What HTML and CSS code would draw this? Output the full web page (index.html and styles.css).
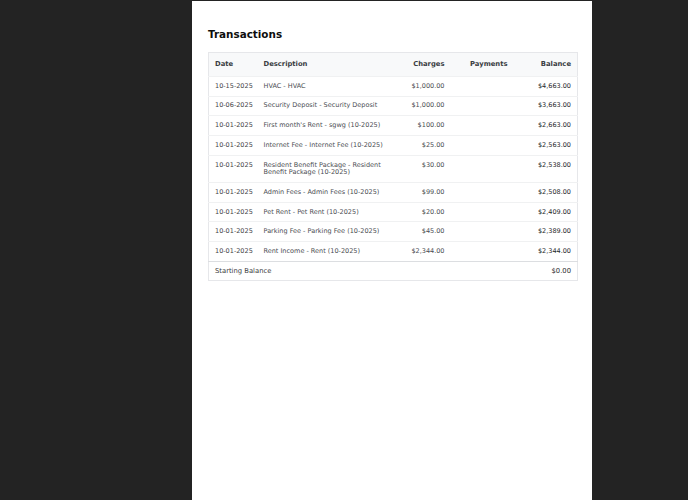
FILE: index.html
```html
<!DOCTYPE html>
<html>
<head>
<meta charset="utf-8">
<link rel="stylesheet" href="styles.css">
</head>
<body>
<div class="page">
  <h1 class="title">Transactions</h1>
  <table class="tx">
    <colgroup>
      <col class="c-date"><col class="c-desc"><col class="c-chg"><col class="c-pay"><col class="c-bal">
    </colgroup>
    <thead>
      <tr><th class="l">Date</th><th class="l">Description</th><th class="r">Charges</th><th class="r">Payments</th><th class="r">Balance</th></tr>
    </thead>
    <tbody>
      <tr><td class="date">10-15-2025</td><td class="desc">HVAC - HVAC</td><td class="r chg">$1,000.00</td><td class="r"></td><td class="r bal">$4,663.00</td></tr>
      <tr><td class="date">10-06-2025</td><td class="desc">Security Deposit - Security Deposit</td><td class="r chg">$1,000.00</td><td class="r"></td><td class="r bal">$3,663.00</td></tr>
      <tr><td class="date">10-01-2025</td><td class="desc">First month's Rent - sgwg (10-2025)</td><td class="r chg">$100.00</td><td class="r"></td><td class="r bal">$2,663.00</td></tr>
      <tr><td class="date">10-01-2025</td><td class="desc">Internet Fee - Internet Fee (10-2025)</td><td class="r chg">$25.00</td><td class="r"></td><td class="r bal">$2,563.00</td></tr>
      <tr><td class="date">10-01-2025</td><td class="desc">Resident Benefit Package - Resident Benefit Package (10-2025)</td><td class="r chg">$30.00</td><td class="r"></td><td class="r bal">$2,538.00</td></tr>
      <tr><td class="date">10-01-2025</td><td class="desc">Admin Fees - Admin Fees (10-2025)</td><td class="r chg">$99.00</td><td class="r"></td><td class="r bal">$2,508.00</td></tr>
      <tr><td class="date">10-01-2025</td><td class="desc">Pet Rent - Pet Rent (10-2025)</td><td class="r chg">$20.00</td><td class="r"></td><td class="r bal">$2,409.00</td></tr>
      <tr><td class="date">10-01-2025</td><td class="desc">Parking Fee - Parking Fee (10-2025)</td><td class="r chg">$45.00</td><td class="r"></td><td class="r bal">$2,389.00</td></tr>
      <tr><td class="date">10-01-2025</td><td class="desc">Rent Income - Rent (10-2025)</td><td class="r chg">$2,344.00</td><td class="r"></td><td class="r bal">$2,344.00</td></tr>
    </tbody>
    <tfoot>
      <tr><td class="start" colspan="4">Starting Balance</td><td class="r start bal">$0.00</td></tr>
    </tfoot>
  </table>
</div>
</body>
</html>
```
FILE: styles.css
```css
html, body {
  margin: 0;
  padding: 0;
  height: 100%;
}
body {
  background: #232323;
  font-family: "DejaVu Sans", sans-serif;
  padding-top: 1px;
  box-sizing: border-box;
  overflow: hidden;
}
.page {
  margin-left: 192px;
  width: 400px;
  height: 100%;
  background: #ffffff;
  box-sizing: border-box;
  padding: 26px 15px 0 16px;
}
.title {
  margin: 0 0 11px 0;
  font-size: 10.4px;
  line-height: 14px;
  font-weight: bold;
  color: #0d0d0d;
}
.tx {
  width: 369px;
  border-collapse: collapse;
  table-layout: fixed;
  border: 1px solid #e6e7ea;
}
.c-date { width: 49px; }
.c-desc { width: 140px; }
.c-chg { width: 53px; }
.c-pay { width: 63px; }
.c-bal { width: 64px; }
.tx th {
  background: #f8f9fa;
  font-size: 6.8px;
  line-height: 7.6px;
  font-weight: bold;
  color: #3a3d42;
  padding: 8px 6px 7.4px 6px;
}
.tx td {
  font-size: 6.5px;
  line-height: 7.6px;
  padding: 5.8px 6px 5.3px 6px;
  border-top: 1px solid #f0f1f2;
  vertical-align: top;
  color: #4a4d52;
}
.tx th.l { text-align: left; }
.tx .r { text-align: right; }
.tx td.date { color: #3f4246; white-space: nowrap; }
.tx td.bal { color: #26282b; }
.tx tfoot td {
  border-top: 1px solid #dcdee1;
  font-size: 6.8px;
  padding: 5.8px 6px 5px 6px;
  color: #3a3d42;
}
.tx tfoot td.bal { color: #26282b; }
```
